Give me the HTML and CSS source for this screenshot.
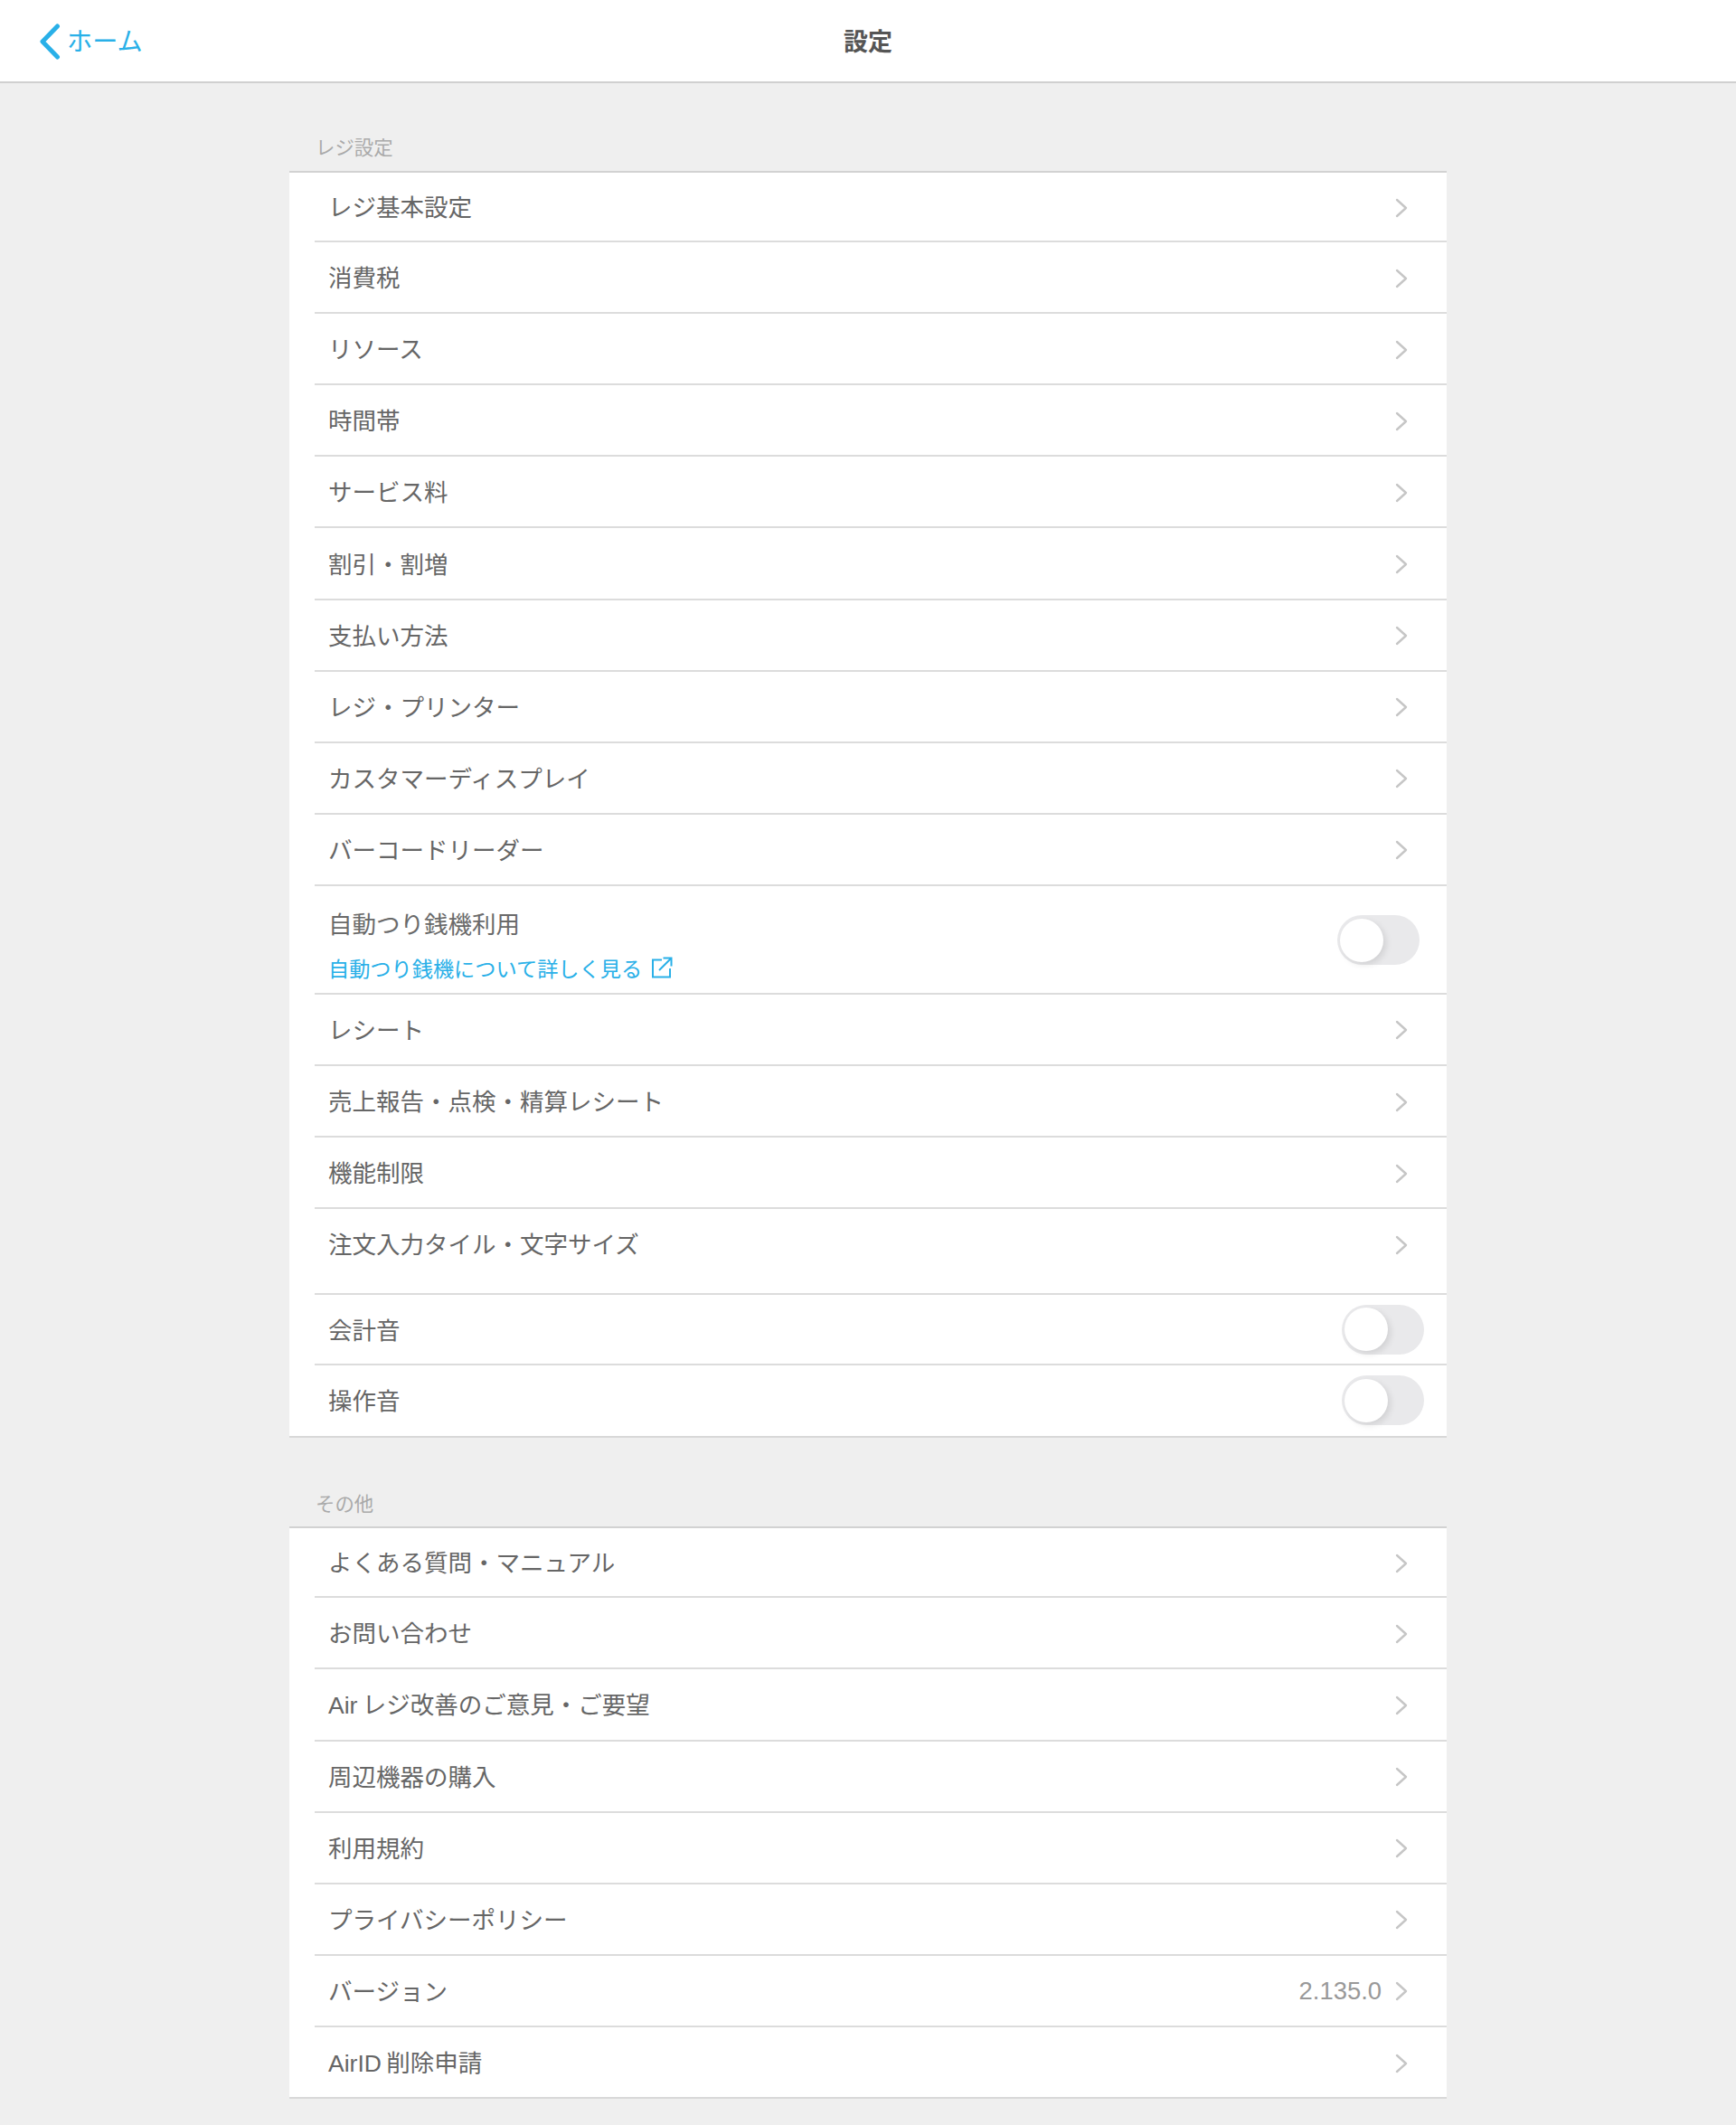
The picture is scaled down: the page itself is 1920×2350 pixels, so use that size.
FILE: index.html
```html
<!DOCTYPE html>
<html lang="ja">
<head>
<meta charset="utf-8">
<title>設定</title>
<link rel="stylesheet" href="styles.css">
</head>
<body>
<svg class="defs" width="0" height="0" aria-hidden="true">
  <symbol id="chev" viewBox="0 0 14 22"><path d="M2 2l10 9-10 9" fill="none" stroke="#c6c6c6" stroke-width="2.400" stroke-linecap="round" stroke-linejoin="round"/></symbol>
</svg>
<header class="topbar">
  <a class="back">
    <svg class="back-icon" viewBox="0 0 24 40"><path d="M20.500 3L4 20l16.500 17" fill="none" stroke="#29b0e8" stroke-width="5" stroke-linecap="round" stroke-linejoin="round"/></svg>
    <span>ホーム</span>
  </a>
  <h1 class="title">設定</h1>
</header>
<main class="content">
  <section class="group group-first">
    <h2 class="group-label">レジ設定</h2>
    <ul class="list">
      <li class="row"><div class="row-inner"><span>レジ基本設定</span><svg class="chev"><use href="#chev"/></svg></div></li>
      <li class="row"><div class="row-inner"><span>消費税</span><svg class="chev"><use href="#chev"/></svg></div></li>
      <li class="row"><div class="row-inner"><span>リソース</span><svg class="chev"><use href="#chev"/></svg></div></li>
      <li class="row"><div class="row-inner"><span>時間帯</span><svg class="chev"><use href="#chev"/></svg></div></li>
      <li class="row"><div class="row-inner"><span>サービス料</span><svg class="chev"><use href="#chev"/></svg></div></li>
      <li class="row"><div class="row-inner"><span>割引・割増</span><svg class="chev"><use href="#chev"/></svg></div></li>
      <li class="row"><div class="row-inner"><span>支払い方法</span><svg class="chev"><use href="#chev"/></svg></div></li>
      <li class="row"><div class="row-inner"><span>レジ・プリンター</span><svg class="chev"><use href="#chev"/></svg></div></li>
      <li class="row"><div class="row-inner"><span>カスタマーディスプレイ</span><svg class="chev"><use href="#chev"/></svg></div></li>
      <li class="row"><div class="row-inner"><span>バーコードリーダー</span><svg class="chev"><use href="#chev"/></svg></div></li>
      <li class="row row-auto"><div class="row-inner">
        <div class="stack">
          <span class="muted">自動つり銭機利用</span>
          <a class="more">自動つり銭機について詳しく見る<svg class="ext" viewBox="0 0 24 24"><path d="M12 3.500H2v19h19V13M9 15L22.500 1.500M13.500 1.500h9v9" fill="none" stroke="#29b0e8" stroke-width="2"/></svg></a>
        </div>
        <span class="toggle toggle-a"></span>
      </div></li>
      <li class="row"><div class="row-inner"><span>レシート</span><svg class="chev"><use href="#chev"/></svg></div></li>
      <li class="row"><div class="row-inner"><span>売上報告・点検・精算レシート</span><svg class="chev"><use href="#chev"/></svg></div></li>
      <li class="row"><div class="row-inner"><span>機能制限</span><svg class="chev"><use href="#chev"/></svg></div></li>
      <li class="row row-tall"><div class="row-inner"><span>注文入力タイル・文字サイズ</span><svg class="chev"><use href="#chev"/></svg></div></li>
      <li class="row row-toggle"><div class="row-inner"><span>会計音</span><span class="toggle"></span></div></li>
      <li class="row row-toggle"><div class="row-inner"><span>操作音</span><span class="toggle"></span></div></li>
    </ul>
  </section>
  <section class="group">
    <h2 class="group-label">その他</h2>
    <ul class="list">
      <li class="row"><div class="row-inner"><span>よくある質問・マニュアル</span><svg class="chev"><use href="#chev"/></svg></div></li>
      <li class="row"><div class="row-inner"><span>お問い合わせ</span><svg class="chev"><use href="#chev"/></svg></div></li>
      <li class="row"><div class="row-inner"><span>Air&#8201;レジ改善のご意見・ご要望</span><svg class="chev"><use href="#chev"/></svg></div></li>
      <li class="row"><div class="row-inner"><span>周辺機器の購入</span><svg class="chev"><use href="#chev"/></svg></div></li>
      <li class="row"><div class="row-inner"><span>利用規約</span><svg class="chev"><use href="#chev"/></svg></div></li>
      <li class="row"><div class="row-inner"><span>プライバシーポリシー</span><svg class="chev"><use href="#chev"/></svg></div></li>
      <li class="row"><div class="row-inner"><span>バージョン</span><span class="value">2.135.0</span><svg class="chev chev-value"><use href="#chev"/></svg></div></li>
      <li class="row"><div class="row-inner"><span>AirID&#8201;削除申請</span><svg class="chev"><use href="#chev"/></svg></div></li>
    </ul>
  </section>
</main>
</body>
</html>
```
FILE: styles.css
```css
* { box-sizing: border-box; }
html, body { margin: 0; padding: 0; }
body {
  background: #efefef;
  color: #666;
  font-family: "Liberation Sans", "Noto Sans CJK JP", sans-serif;
  font-size: 26.500px;
}
.defs { position: absolute; }
.topbar {
  height: 92px;
  background: #fff;
  border-bottom: 2px solid #d0d0d0;
  display: flex;
  align-items: center;
  justify-content: center;
  position: relative;
}
.back {
  position: absolute;
  left: 43px;
  top: 25px;
  display: flex;
  align-items: center;
  color: #29b0e8;
  font-size: 28.200px;
  line-height: 40px;
}
.back-icon { width: 24px; height: 40px; margin-right: 7px; }
.back span { margin-top: 1px; }
.title {
  margin: 0 0 1px;
  font-size: 27px;
  font-weight: 700;
  color: #555;
}
.content { width: 1280px; margin: 0 auto; }
.group-label {
  margin: 0;
  height: 98.500px;
  padding: 59px 0 0 29px;
  font-size: 21.400px;
  line-height: 30px;
  font-weight: 400;
  color: #aaa;
}
.group-first .group-label { height: 97px; padding-top: 57px; }
.list {
  list-style: none;
  margin: 0;
  padding: 0;
  background: #fff;
  border-top: 2px solid #d2d2d2;
  border-bottom: 2px solid #d8d8d8;
}
.row { height: 79.100px; padding-left: 28px; }
.row:first-child { height: 77.100px; }
.row-inner {
  height: 100%;
  display: flex;
  align-items: center;
  padding: 0 43px 0 15px;
  border-bottom: 2px solid #dcdcdc;
}
.row:last-child { height: 77.500px; }
.row:last-child .row-inner { border-bottom: 0; }
.row-inner > span:first-child { flex: 1; padding-bottom: 2px; }
.chev { width: 14px; height: 22px; flex: none; margin-top: 2px; }
.chev-value { margin-left: 15px; }
.value { color: #999; font-size: 27.400px; margin-top: 2px; }
.row-auto { height: 120px; }
.stack { flex: 1; display: flex; flex-direction: column; gap: 15px; padding-top: 18px; }
.muted { line-height: 34px; color: #6a6a6a; }
.more {
  display: flex;
  align-items: center;
  color: #29b0e8;
  font-size: 23.200px;
  line-height: 34px;
}
.ext { width: 24px; height: 24px; margin: 0 0 4px 10px; }
.row-tall { height: 95px; }
.row-tall .row-inner { align-items: flex-start; padding-top: 22px; }
.row-tall .row-inner > span:first-child { line-height: 36px; }
.row-tall .chev { margin-top: 7px; }
.row-toggle { height: 78px; }
.row-toggle .row-inner { padding-right: 25px; }
.row-auto .row-inner { padding-right: 30px; }
.toggle {
  flex: none;
  width: 91px;
  height: 55px;
  border-radius: 28px;
  background: #e9e9eb;
  position: relative;
  display: block;
}
.toggle::after {
  content: "";
  position: absolute;
  left: 3px;
  top: 3.500px;
  width: 48px;
  height: 48px;
  border-radius: 50%;
  background: #fff;
  box-shadow: 3px 3px 7px rgba(0, 0, 0, .1);
}
.toggle-a { margin-top: 2px; }
```
